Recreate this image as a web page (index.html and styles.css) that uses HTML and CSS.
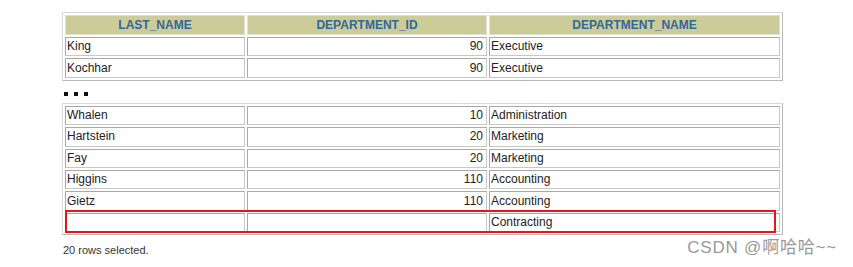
FILE: index.html
```html
<!DOCTYPE html>
<html>
<head>
<meta charset="utf-8">
<link rel="stylesheet" href="styles.css">
</head>
<body>
<div class="page">
  <table class="grid">
    <colgroup><col class="c1"><col class="c2"><col class="c3"></colgroup>
    <tr><th>LAST_NAME</th><th>DEPARTMENT_ID</th><th>DEPARTMENT_NAME</th></tr>
    <tr><td>King</td><td class="num">90</td><td>Executive</td></tr>
    <tr><td>Kochhar</td><td class="num">90</td><td>Executive</td></tr>
  </table>
  <div class="dots"><span></span><span></span><span></span></div>
  <div class="wrap">
    <table class="grid">
      <colgroup><col class="c1"><col class="c2"><col class="c3"></colgroup>
      <tr><td>Whalen</td><td class="num">10</td><td>Administration</td></tr>
      <tr><td>Hartstein</td><td class="num">20</td><td>Marketing</td></tr>
      <tr><td>Fay</td><td class="num">20</td><td>Marketing</td></tr>
      <tr><td>Higgins</td><td class="num">110</td><td>Accounting</td></tr>
      <tr><td>Gietz</td><td class="num">110</td><td>Accounting</td></tr>
      <tr><td></td><td class="num"></td><td>Contracting</td></tr>
    </table>
    <div class="highlight"></div>
  </div>
  <div class="foot">
    <span class="rows">20 rows selected.</span>
    <span class="mark">CSDN @啊哈哈~~</span>
  </div>
</div>
</body>
</html>
```
FILE: styles.css
```css
html, body {
  margin: 0;
  padding: 0;
  background: #fff;
}
.page {
  padding: 12px 0 0 62px;
  width: 721px;
  font-family: "Liberation Sans", Arial, "Noto Sans CJK SC", sans-serif;
  font-size: 12px;
  color: #222;
}
.grid {
  border-collapse: separate;
  border-spacing: 2px;
  border: 1px solid #d8d8d8;
  border-right-color: #b8b8b8;
  border-bottom-color: #b8b8b8;
  width: 721px;
  table-layout: fixed;
}
.c1 { width: 180px; }
.c2 { width: 240px; }
.c3 { width: auto; }
.grid th, .grid td {
  border: 1px solid #c8c8c8;
  border-top-color: #a8a8a8;
  border-left-color: #a8a8a8;
  height: 17.4px;
  padding: 0 1px;
  line-height: 17px;
  white-space: nowrap;
}
.grid th {
  background: #cccc99;
  color: #336699;
  font-weight: bold;
  text-align: center;
  border-color: #e0e0d0;
  height: 18px;
}
.grid td {
  background: #fff;
}
.grid td.num {
  text-align: right;
  padding-right: 3px;
}
.dots {
  display: flex;
  gap: 6px;
  padding: 11px 0 0 2px;
  height: 11px;
}
.dots span {
  width: 4px;
  height: 4px;
  background: #111;
}
.wrap {
  position: relative;
}
.highlight {
  position: absolute;
  left: 3px;
  top: 107px;
  width: 707px;
  height: 19px;
  border: 2px solid #e8141b;
}
.foot {
  display: flex;
  justify-content: space-between;
  align-items: center;
  margin-top: 2px;
  width: 775px;
  height: 22px;
}
.rows {
  color: #333;
  font-size: 11px;
  margin-left: 1px;
  margin-top: 4px;
}
.mark {
  color: #999;
  font-size: 17px;
  line-height: 20px;
  letter-spacing: 0.8px;
}
```
